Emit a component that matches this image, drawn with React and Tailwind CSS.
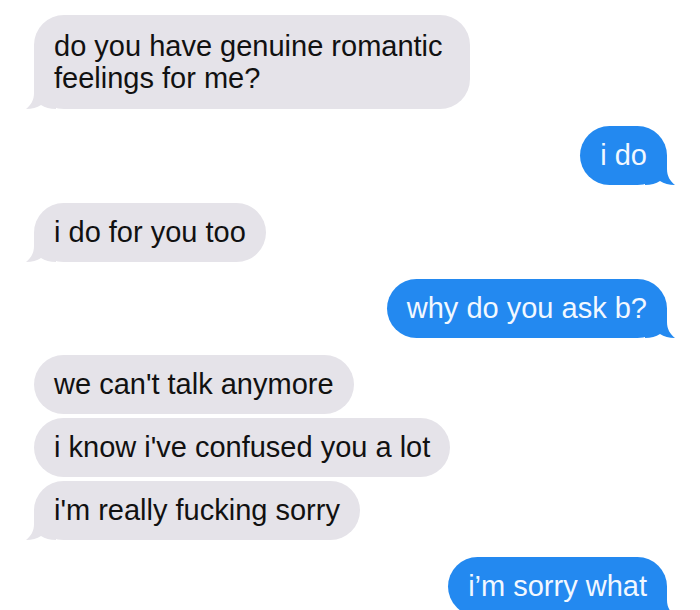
import React from "react";

const GRAY = "#e5e3e9";
const BLUE = "#2389f0";

function Tail({ side, color }) {
  if (side === "left") {
    return (
      <svg
        className="absolute bottom-0 left-[-8px]"
        width="30"
        height="30"
        viewBox="0 0 30 30"
      >
        <path
          d="M8 0 L8 14 C8 21 5 26 0 30 C6 30 11 28.5 15 26 C19 28.5 24 30 30 30 L30 0 Z"
          fill={color}
        />
      </svg>
    );
  }
  return (
    <svg
      className="absolute bottom-0 right-[-8px]"
      width="30"
      height="30"
      viewBox="0 0 30 30"
    >
      <path
        d="M22 0 L22 14 C22 21 25 26 30 30 C24 30 19 28.5 15 26 C11 28.5 6 30 0 30 L0 0 Z"
        fill={color}
      />
    </svg>
  );
}

function Bubble({ side, text, tail, className = "" }) {
  const isLeft = side === "left";
  return (
    <div className={`flex ${isLeft ? "justify-start pl-[34px]" : "justify-end pr-[33px]"} ${className}`}>
      <div
        className={`relative rounded-[30px] px-[20px] py-[14px] text-[29px] leading-[31px] ${
          isLeft ? "bg-[#e5e3e9] text-[#111]" : "bg-[#2389f0] text-[#f2f8ff]"
        }`}
      >
        {tail && <Tail side={side} color={isLeft ? GRAY : BLUE} />}
        <span className="relative">{text}</span>
      </div>
    </div>
  );
}

export default function App() {
  return (
    <div
      className="w-[700px] h-[610px] overflow-hidden bg-white pt-[15px]"
      style={{ fontFamily: '"Liberation Sans", Arial, sans-serif' }}
    >
      <div className="flex justify-start pl-[34px]">
        <div className="relative rounded-[30px] px-[20px] py-[15px] text-[29px] leading-[32px] bg-[#e5e3e9] text-[#111] w-[436px]">
          <Tail side="left" color={GRAY} />
          <span className="relative">
            do you have genuine romantic
            <br />
            feelings for me?
          </span>
        </div>
      </div>
      <Bubble side="right" text="i do" tail className="mt-[17px]" />
      <Bubble side="left" text="i do for you too" tail className="mt-[18px]" />
      <Bubble side="right" text="why do you ask b?" tail className="mt-[17px]" />
      <Bubble side="left" text="we can't talk anymore" className="mt-[17px]" />
      <Bubble side="left" text="i know i've confused you a lot" className="mt-[4px]" />
      <Bubble side="left" text="i'm really fucking sorry" tail className="mt-[4px]" />
      <Bubble side="right" text="i’m sorry what" tail className="mt-[17px]" />
    </div>
  );
}
